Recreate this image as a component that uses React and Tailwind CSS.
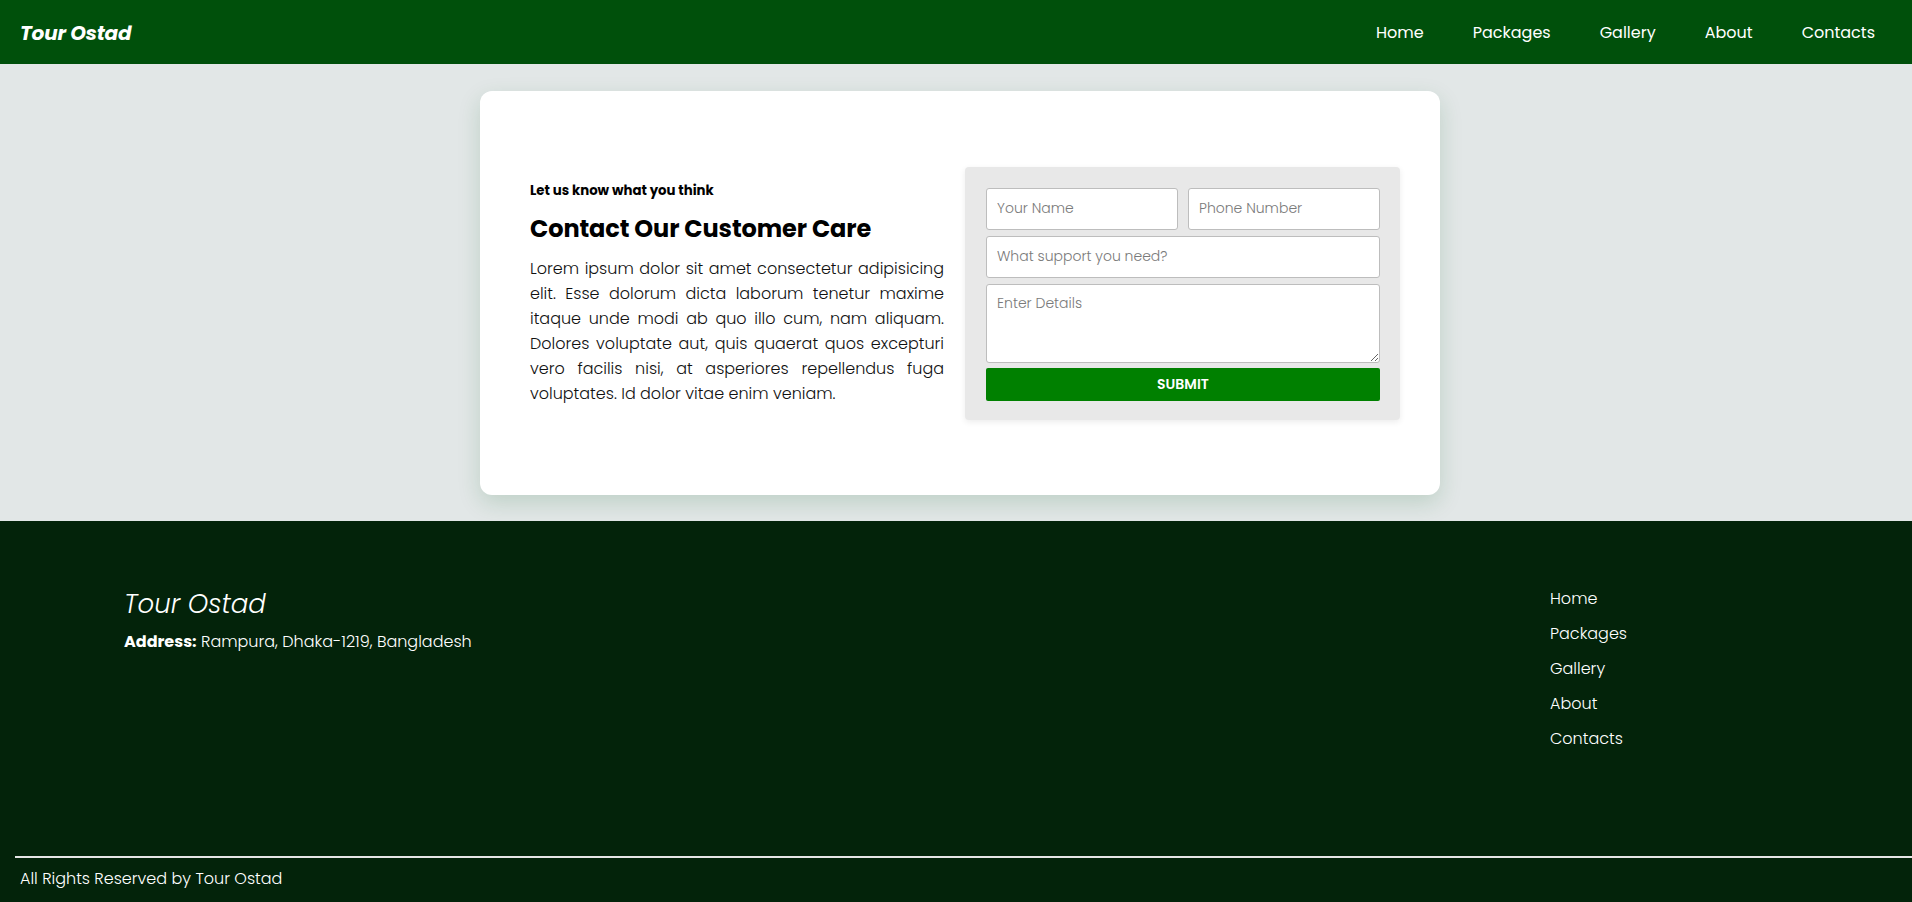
import React from "react";

const links = ["Home", "Packages", "Gallery", "About", "Contacts"];

const Navbar = () => (
  <nav className="h-[64px] bg-[#00500b] flex items-center justify-between pl-[20px] pr-[37px]">
    <a className="text-white text-[20px] font-bold italic tracking-[-0.2px] mt-[2px]">Tour Ostad</a>
    <ul className="flex items-center gap-[49px]">
      {links.map((l) => (
        <li key={l} className="text-white text-[16px] mt-[2px]">{l}</li>
      ))}
    </ul>
  </nav>
);

const ContactCard = () => (
  <section className="bg-[#e2e7e7] pt-[27px] pb-[26px]">
    <div className="w-[960px] h-[404px] ml-[480px] bg-white rounded-[12px] shadow-[0_8px_22px_rgba(20,100,40,0.17)] flex items-center pl-[50px] pr-[40px]">
      {/* left text */}
      <div className="w-[414px] mt-[1px]">
        <p className="text-[13.3px] font-bold text-black">Let us know what you think</p>
        <h2 className="text-[24px] font-bold text-black mt-[10px] tracking-[-0.1px]">Contact Our Customer Care</h2>
        <p className="text-[16px] font-light leading-[25px] text-[#111] text-justify mt-[9px]">
          Lorem ipsum dolor sit amet consectetur adipisicing elit. Esse dolorum dicta laborum tenetur maxime itaque unde modi ab quo illo cum, nam aliquam. Dolores voluptate aut, quis quaerat quos excepturi vero facilis nisi, at asperiores repellendus fuga voluptates. Id dolor vitae enim veniam.
        </p>
      </div>

      {/* form */}
      <form className="ml-[21px] w-[435px] bg-[#e8e8e8] rounded-[4px] shadow-[0_2px_6px_rgba(0,0,0,0.08)] pt-[21px] pl-[21px] pr-[20px] pb-[19px] flex flex-col">
        <div className="flex gap-[10px]">
          <input placeholder="Your Name" className="w-[192px] h-[42px] bg-white border border-[#bdbdbd] rounded-[3px] px-[10px] text-[14px] font-light placeholder:text-[#7a7a7a] outline-none" />
          <input placeholder="Phone Number" className="w-[192px] h-[42px] bg-white border border-[#bdbdbd] rounded-[3px] px-[10px] text-[14px] font-light placeholder:text-[#7a7a7a] outline-none" />
        </div>
        <input placeholder="What support you need?" className="mt-[6px] w-full h-[42px] bg-white border border-[#bdbdbd] rounded-[3px] px-[10px] text-[14px] font-light placeholder:text-[#7a7a7a] outline-none" />
        <textarea placeholder="Enter Details" className="mt-[6px] w-full h-[79px] bg-white border border-[#bdbdbd] rounded-[3px] px-[10px] py-[8px] text-[14px] font-light placeholder:text-[#7a7a7a] outline-none block" />
        <button type="button" className="mt-[5px] w-full h-[33px] bg-[#008000] rounded-[2px] text-white text-[14px] font-semibold">SUBMIT</button>
      </form>
    </div>
  </section>
);

const Footer = () => (
  <footer className="bg-[#03230a] text-white h-[381px] flex flex-col">
    <div className="flex justify-between pl-[124px] pr-[40px] pt-[64px] flex-1">
      <div>
        <h3 className="text-[26px] italic font-light leading-[38px]">Tour Ostad</h3>
        <p className="text-[16px] font-light mt-[7px]"><b className="font-bold">Address:</b> Rampura, Dhaka-1219, Bangladesh</p>
      </div>
      <ul className="w-[322px] flex flex-col gap-[11px] pt-[2px]">
        {links.map((l) => (
          <li key={l} className="text-[16px] font-light leading-[24px]">{l}</li>
        ))}
      </ul>
    </div>
    <div className="ml-[15px] border-t-2 border-[#e5e5e5]" />
    <p className="pl-[20px] text-[16px] font-light leading-[24px] pt-[9px] pb-[11px]">All Rights Reserved by Tour Ostad</p>
  </footer>
);

const App = () => {
  return (
    <div className="min-h-screen bg-[#e2e7e7] font-['Poppins','Open_Sans',sans-serif]">
      <Navbar />
      <ContactCard />
      <Footer />
    </div>
  );
};

export default App;
